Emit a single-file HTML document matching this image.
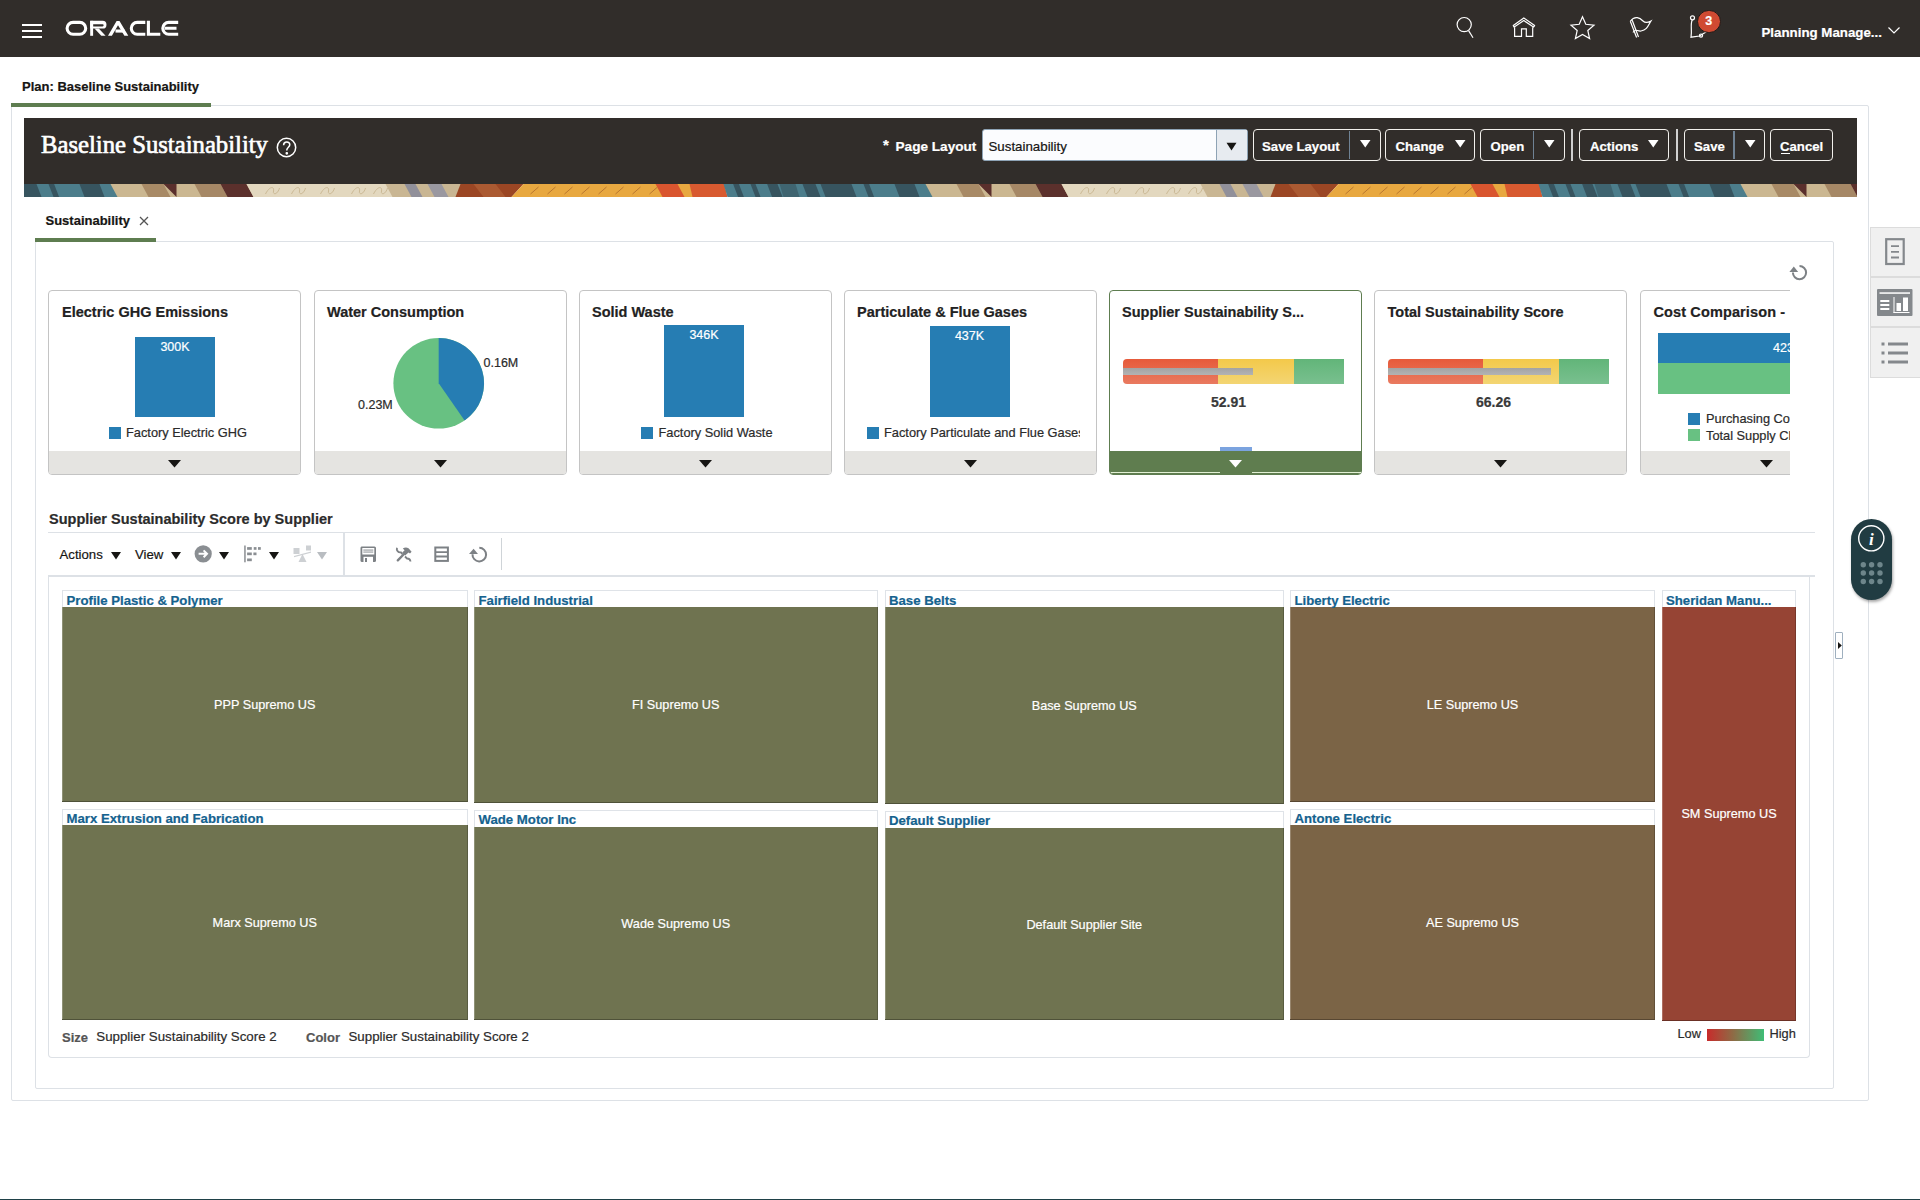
<!DOCTYPE html>
<html>
<head>
<meta charset="utf-8">
<style>
*{box-sizing:border-box;margin:0;padding:0}
html,body{width:1920px;height:1200px;overflow:hidden;background:#fff}
body{position:relative;font-family:"Liberation Sans",sans-serif;color:#161513;-webkit-text-stroke-width:0.2px}
.a{position:absolute}
.t{position:absolute;white-space:nowrap;line-height:1}
.b{font-weight:bold}
svg{position:absolute;overflow:visible}
.btn{top:129px;height:32px;border:1.6px solid #f2f0ec;border-radius:4px}
.bt{top:139.6px;font-size:13.2px;color:#fff}
.arr{top:140px;width:11px;height:8px;fill:#fff}
.card{position:absolute;top:290px;width:253px;height:184.5px;border:1.5px solid #c4c4c4;border-radius:4px;overflow:hidden;background:#fff}
.cf{position:absolute;left:0;right:0;bottom:0;height:22.5px;background:#e5e4e1}
.ct{top:304.8px;font-size:14.5px;color:#222}
.bl{font-size:12.5px;color:#fff;text-align:center}
.lg{font-size:12.8px;color:#2b2b2b}
.pl{font-size:12.5px;color:#2b2b2b}
.da{top:460px;width:13px;height:8px;fill:#161513}
.gauge{position:absolute;top:358.5px;width:221px;height:25.5px;display:flex;border-radius:4px 0 0 4px;overflow:hidden}
.gr{height:100%;background:linear-gradient(#e65a3a,#e97a60)}
.gy{height:100%;background:linear-gradient(#f3c94a,#f3d573)}
.gg{height:100%;background:linear-gradient(#62b579,#79c08f)}
.gb{position:absolute;left:0;top:9.8px;height:6.6px;background:linear-gradient(#a3a3a3,#b3b3b3)}
.ta{top:551.5px;width:10px;height:8px;fill:#161513}
.th{position:absolute;border:1px solid #dfe3e8;border-bottom:none;background:#fff}
.tt{position:absolute;left:-1px;right:-1px;bottom:0;border-bottom:1px solid rgba(0,0,0,.28);border-right:1px solid rgba(0,0,0,.2);box-shadow:inset 1px 0 0 rgba(255,255,255,.22)}
.tn{font-size:13.2px;font-weight:bold;color:#15628e}
.tl{font-size:12.7px;color:#fff;text-align:center}
.gv{top:394.5px;font-size:14px;font-weight:bold;color:#3a3a3a}
</style>
</head>
<body>
<!-- HEADER -->
<div class="a" style="left:0;top:0;width:1920px;height:57px;background:#312d2a"></div>
<div class="a" style="left:22px;top:24px;width:20px;height:2px;background:#fff"></div>
<div class="a" style="left:22px;top:30px;width:20px;height:2px;background:#fff"></div>
<div class="a" style="left:22px;top:36px;width:20px;height:2px;background:#fff"></div>
<svg style="left:60px;top:14px" width="125" height="30" viewBox="0 0 125 30">
 <g fill="none" stroke="#fff" stroke-width="3.1">
  <rect x="7.1" y="8.35" width="18.6" height="11.9" rx="5.95"/>
  <path d="M85.3 8.4 H77.2 A5.9 5.9 0 0 0 77.2 20.2 H85.3"/>
  <path d="M88.4 6.8 V20.25 H100.3"/>
  <path d="M118.2 8.4 H108.7 A5.9 5.9 0 0 0 108.7 20.2 H118.2 M104.8 14.3 H116.5"/>
 </g>
 <g fill="#fff">
  <rect x="30.2" y="6.85" width="2.9" height="14.95"/>
  <path d="M30.2 6.85 H42.6 A3.87 3.87 0 0 1 42.6 14.6 H30.2 Z M33.1 10.3 V12.4 H42.6 A1.05 1.05 0 0 0 42.6 10.3 Z" fill-rule="evenodd"/>
  <path d="M34.5 14.5 H38.8 L45.6 21.8 H41.3 Z"/>
  <path d="M48 21.8 L56.6 6.9 H59.5 L68.3 21.8 H64.4 L58 11.3 L51.9 21.8 Z"/>
  <rect x="55.5" y="15.5" width="9" height="3.1"/>
 </g>
</svg>
<!-- header icons -->
<svg style="left:1440px;top:0" width="290" height="57" viewBox="0 0 290 57" fill="none" stroke="#fff" stroke-width="1.2">
 <circle cx="24.2" cy="24.6" r="7.1"/>
 <path d="M28.6 30.6 L33 37.8"/>
 <path d="M73.3 25.6 L83.8 17.9 L94.6 25.6 L93.5 27.1 L83.8 20.6 L74.2 27.1 Z" stroke-linejoin="round"/>
 <path d="M74.6 27.2 V36.4 H81.5 V28.9 H86.3 V36.4 H92.7 V27.2"/>
 <path d="M142.5 16.7 L145.8 24.3 L154.0 25.1 L147.8 30.5 L149.6 38.6 L142.5 34.4 L135.4 38.6 L137.2 30.5 L131.0 25.1 L139.2 24.3 Z" stroke-linejoin="miter"/>
 <path d="M190.3 21.3 C195 15 200 18 203 21 C206 24 209 22 211 21 C208 26 207 30 201 31 C197 31.5 195 28 193 32.5"/>
 <path d="M190.3 21.3 L196.6 37.5 M192.2 20.3 L198.5 37"/>
 <circle cx="252.5" cy="17.8" r="2"/>
 <path d="M252.3 19.9 C250 24 252.3 30 251 37.2 L259.5 36 L268.5 30.5"/>
 <circle cx="261" cy="35.6" r="1.6"/>
</svg>
<div class="a" style="left:1697px;top:9.5px;width:23.5px;height:23.5px;border-radius:50%;background:#d04a32;border:1.5px solid #1e1b19"></div>
<div class="t b" style="left:1697px;top:15.2px;width:23.5px;text-align:center;font-size:12.5px;color:#fff">3</div>
<div class="t b" style="left:1761.5px;top:25.5px;font-size:13.3px;color:#fff">Planning Manage...</div>
<svg style="left:1888px;top:27px" width="12" height="7" viewBox="0 0 12 7" fill="none" stroke="#fff" stroke-width="1.2"><path d="M0.5 0.5 L6 6 L11.5 0.5"/></svg>

<!-- PLAN TAB -->
<div class="t b" style="left:22px;top:79.5px;font-size:13px;color:#161513">Plan: Baseline Sustainability</div>
<div class="a" style="left:11px;top:105px;width:1858px;height:996px;border:1px solid #dde1e6;border-radius:2px"></div>
<div class="a" style="left:11px;top:103px;width:200px;height:3.5px;background:#5e7d50"></div>

<!-- BANNER -->
<div class="a" style="left:24px;top:118px;width:1833px;height:66px;background:#312d2a"></div>
<div id="strip" class="a" style="left:24px;top:184px;width:1833px;height:13px;overflow:hidden"><svg style="left:0;top:0" width="1833" height="13" viewBox="0 0 1833 13"><g transform="translate(-723.5 0)"><path d="M-5 0 H140 L147 13 H2 Z" fill="#cbb791"/><path d="M26 0 H48 L55 13 H33 Z" fill="#a88a66"/><path d="M48 0 H61 L61 13 H61 Z" fill="#5a2f2c"/><path d="M79 0 H105 L112 13 H86 Z" fill="#a68866"/><path d="M105 0 H131 L138 13 H112 Z" fill="#5b302c"/><path d="M131 0 H275 L282 13 H138 Z" fill="#e3d8bf"/><path d="M150 10 C154 2 159 2 158 7 C157 11 162 11 164 4" fill="none" stroke="#cbb995" stroke-width="1"/><path d="M176 10 C180 2 185 2 184 7 C183 11 188 11 190 4" fill="none" stroke="#cbb995" stroke-width="1"/><path d="M205 10 C209 2 214 2 213 7 C212 11 217 11 219 4" fill="none" stroke="#cbb995" stroke-width="1"/><path d="M236 10 C240 2 245 2 244 7 C243 11 248 11 250 4" fill="none" stroke="#cbb995" stroke-width="1"/><path d="M258 10 C262 2 267 2 266 7 C265 11 270 11 272 4" fill="none" stroke="#cbb995" stroke-width="1"/><path d="M270 0 H350 L357 13 H277 Z" fill="#c9b693"/><path d="M289 0 H300 L307 13 H296 Z" fill="#91909a"/><path d="M312 0 H326 L333 13 H319 Z" fill="#9a98a0"/><path d="M345 0 H408 L396 13 H340 Z" fill="#9b4624"/><path d="M358 0 H380 L390 13 H368 Z" fill="#ab5a32"/><path d="M408 0 H542 L548 13 H396 Z" fill="#e8a840"/><path d="M415 10 L423 3" stroke="#b97730" stroke-width="1"/><path d="M432 10 L440 3" stroke="#b97730" stroke-width="1"/><path d="M449 10 L457 3" stroke="#b97730" stroke-width="1"/><path d="M466 10 L474 3" stroke="#b97730" stroke-width="1"/><path d="M483 10 L491 3" stroke="#b97730" stroke-width="1"/><path d="M500 10 L508 3" stroke="#b97730" stroke-width="1"/><path d="M517 10 L525 3" stroke="#b97730" stroke-width="1"/><path d="M534 10 L542 3" stroke="#b97730" stroke-width="1"/><path d="M540 0 H580 L587 13 H547 Z" fill="#e8a840"/><path d="M540 0 H562 L569 13 H547 Z" fill="#d9552f"/><path d="M574 0 H609 L612 13 H577 Z" fill="#d85a30"/><path d="M608 0 H822 L826 13 H612 Z" fill="#4c7d8b"/><path d="M617.6 0 H623.4 L628.4 13 H622.6 Z" fill="#37545f"/><path d="M635 0 H640 L645 13 H640 Z" fill="#37545f"/><path d="M651.6 0 H662 L667 13 H656.6 Z" fill="#37545f"/><path d="M687 0 H700 L705 13 H692 Z" fill="#37545f"/><path d="M705 0 H736 L741 13 H710 Z" fill="#37545f"/><path d="M748 0 H753.6 L758.6 13 H753 Z" fill="#37545f"/><path d="M779 0 H799 L804 13 H784 Z" fill="#37545f"/><path d="M664 0 H680 L684 13 H668 Z" fill="#3f6470"/></g><g transform="translate(91.5 0)"><path d="M-5 0 H140 L147 13 H2 Z" fill="#cbb791"/><path d="M26 0 H48 L55 13 H33 Z" fill="#a88a66"/><path d="M48 0 H61 L61 13 H61 Z" fill="#5a2f2c"/><path d="M79 0 H105 L112 13 H86 Z" fill="#a68866"/><path d="M105 0 H131 L138 13 H112 Z" fill="#5b302c"/><path d="M131 0 H275 L282 13 H138 Z" fill="#e3d8bf"/><path d="M150 10 C154 2 159 2 158 7 C157 11 162 11 164 4" fill="none" stroke="#cbb995" stroke-width="1"/><path d="M176 10 C180 2 185 2 184 7 C183 11 188 11 190 4" fill="none" stroke="#cbb995" stroke-width="1"/><path d="M205 10 C209 2 214 2 213 7 C212 11 217 11 219 4" fill="none" stroke="#cbb995" stroke-width="1"/><path d="M236 10 C240 2 245 2 244 7 C243 11 248 11 250 4" fill="none" stroke="#cbb995" stroke-width="1"/><path d="M258 10 C262 2 267 2 266 7 C265 11 270 11 272 4" fill="none" stroke="#cbb995" stroke-width="1"/><path d="M270 0 H350 L357 13 H277 Z" fill="#c9b693"/><path d="M289 0 H300 L307 13 H296 Z" fill="#91909a"/><path d="M312 0 H326 L333 13 H319 Z" fill="#9a98a0"/><path d="M345 0 H408 L396 13 H340 Z" fill="#9b4624"/><path d="M358 0 H380 L390 13 H368 Z" fill="#ab5a32"/><path d="M408 0 H542 L548 13 H396 Z" fill="#e8a840"/><path d="M415 10 L423 3" stroke="#b97730" stroke-width="1"/><path d="M432 10 L440 3" stroke="#b97730" stroke-width="1"/><path d="M449 10 L457 3" stroke="#b97730" stroke-width="1"/><path d="M466 10 L474 3" stroke="#b97730" stroke-width="1"/><path d="M483 10 L491 3" stroke="#b97730" stroke-width="1"/><path d="M500 10 L508 3" stroke="#b97730" stroke-width="1"/><path d="M517 10 L525 3" stroke="#b97730" stroke-width="1"/><path d="M534 10 L542 3" stroke="#b97730" stroke-width="1"/><path d="M540 0 H580 L587 13 H547 Z" fill="#e8a840"/><path d="M540 0 H562 L569 13 H547 Z" fill="#d9552f"/><path d="M574 0 H609 L612 13 H577 Z" fill="#d85a30"/><path d="M608 0 H822 L826 13 H612 Z" fill="#4c7d8b"/><path d="M617.6 0 H623.4 L628.4 13 H622.6 Z" fill="#37545f"/><path d="M635 0 H640 L645 13 H640 Z" fill="#37545f"/><path d="M651.6 0 H662 L667 13 H656.6 Z" fill="#37545f"/><path d="M687 0 H700 L705 13 H692 Z" fill="#37545f"/><path d="M705 0 H736 L741 13 H710 Z" fill="#37545f"/><path d="M748 0 H753.6 L758.6 13 H753 Z" fill="#37545f"/><path d="M779 0 H799 L804 13 H784 Z" fill="#37545f"/><path d="M664 0 H680 L684 13 H668 Z" fill="#3f6470"/></g><g transform="translate(906.5 0)"><path d="M-5 0 H140 L147 13 H2 Z" fill="#cbb791"/><path d="M26 0 H48 L55 13 H33 Z" fill="#a88a66"/><path d="M48 0 H61 L61 13 H61 Z" fill="#5a2f2c"/><path d="M79 0 H105 L112 13 H86 Z" fill="#a68866"/><path d="M105 0 H131 L138 13 H112 Z" fill="#5b302c"/><path d="M131 0 H275 L282 13 H138 Z" fill="#e3d8bf"/><path d="M150 10 C154 2 159 2 158 7 C157 11 162 11 164 4" fill="none" stroke="#cbb995" stroke-width="1"/><path d="M176 10 C180 2 185 2 184 7 C183 11 188 11 190 4" fill="none" stroke="#cbb995" stroke-width="1"/><path d="M205 10 C209 2 214 2 213 7 C212 11 217 11 219 4" fill="none" stroke="#cbb995" stroke-width="1"/><path d="M236 10 C240 2 245 2 244 7 C243 11 248 11 250 4" fill="none" stroke="#cbb995" stroke-width="1"/><path d="M258 10 C262 2 267 2 266 7 C265 11 270 11 272 4" fill="none" stroke="#cbb995" stroke-width="1"/><path d="M270 0 H350 L357 13 H277 Z" fill="#c9b693"/><path d="M289 0 H300 L307 13 H296 Z" fill="#91909a"/><path d="M312 0 H326 L333 13 H319 Z" fill="#9a98a0"/><path d="M345 0 H408 L396 13 H340 Z" fill="#9b4624"/><path d="M358 0 H380 L390 13 H368 Z" fill="#ab5a32"/><path d="M408 0 H542 L548 13 H396 Z" fill="#e8a840"/><path d="M415 10 L423 3" stroke="#b97730" stroke-width="1"/><path d="M432 10 L440 3" stroke="#b97730" stroke-width="1"/><path d="M449 10 L457 3" stroke="#b97730" stroke-width="1"/><path d="M466 10 L474 3" stroke="#b97730" stroke-width="1"/><path d="M483 10 L491 3" stroke="#b97730" stroke-width="1"/><path d="M500 10 L508 3" stroke="#b97730" stroke-width="1"/><path d="M517 10 L525 3" stroke="#b97730" stroke-width="1"/><path d="M534 10 L542 3" stroke="#b97730" stroke-width="1"/><path d="M540 0 H580 L587 13 H547 Z" fill="#e8a840"/><path d="M540 0 H562 L569 13 H547 Z" fill="#d9552f"/><path d="M574 0 H609 L612 13 H577 Z" fill="#d85a30"/><path d="M608 0 H822 L826 13 H612 Z" fill="#4c7d8b"/><path d="M617.6 0 H623.4 L628.4 13 H622.6 Z" fill="#37545f"/><path d="M635 0 H640 L645 13 H640 Z" fill="#37545f"/><path d="M651.6 0 H662 L667 13 H656.6 Z" fill="#37545f"/><path d="M687 0 H700 L705 13 H692 Z" fill="#37545f"/><path d="M705 0 H736 L741 13 H710 Z" fill="#37545f"/><path d="M748 0 H753.6 L758.6 13 H753 Z" fill="#37545f"/><path d="M779 0 H799 L804 13 H784 Z" fill="#37545f"/><path d="M664 0 H680 L684 13 H668 Z" fill="#3f6470"/></g><g transform="translate(1721.5 0)"><path d="M-5 0 H140 L147 13 H2 Z" fill="#cbb791"/><path d="M26 0 H48 L55 13 H33 Z" fill="#a88a66"/><path d="M48 0 H61 L61 13 H61 Z" fill="#5a2f2c"/><path d="M79 0 H105 L112 13 H86 Z" fill="#a68866"/><path d="M105 0 H131 L138 13 H112 Z" fill="#5b302c"/><path d="M131 0 H275 L282 13 H138 Z" fill="#e3d8bf"/><path d="M150 10 C154 2 159 2 158 7 C157 11 162 11 164 4" fill="none" stroke="#cbb995" stroke-width="1"/><path d="M176 10 C180 2 185 2 184 7 C183 11 188 11 190 4" fill="none" stroke="#cbb995" stroke-width="1"/><path d="M205 10 C209 2 214 2 213 7 C212 11 217 11 219 4" fill="none" stroke="#cbb995" stroke-width="1"/><path d="M236 10 C240 2 245 2 244 7 C243 11 248 11 250 4" fill="none" stroke="#cbb995" stroke-width="1"/><path d="M258 10 C262 2 267 2 266 7 C265 11 270 11 272 4" fill="none" stroke="#cbb995" stroke-width="1"/><path d="M270 0 H350 L357 13 H277 Z" fill="#c9b693"/><path d="M289 0 H300 L307 13 H296 Z" fill="#91909a"/><path d="M312 0 H326 L333 13 H319 Z" fill="#9a98a0"/><path d="M345 0 H408 L396 13 H340 Z" fill="#9b4624"/><path d="M358 0 H380 L390 13 H368 Z" fill="#ab5a32"/><path d="M408 0 H542 L548 13 H396 Z" fill="#e8a840"/><path d="M415 10 L423 3" stroke="#b97730" stroke-width="1"/><path d="M432 10 L440 3" stroke="#b97730" stroke-width="1"/><path d="M449 10 L457 3" stroke="#b97730" stroke-width="1"/><path d="M466 10 L474 3" stroke="#b97730" stroke-width="1"/><path d="M483 10 L491 3" stroke="#b97730" stroke-width="1"/><path d="M500 10 L508 3" stroke="#b97730" stroke-width="1"/><path d="M517 10 L525 3" stroke="#b97730" stroke-width="1"/><path d="M534 10 L542 3" stroke="#b97730" stroke-width="1"/><path d="M540 0 H580 L587 13 H547 Z" fill="#e8a840"/><path d="M540 0 H562 L569 13 H547 Z" fill="#d9552f"/><path d="M574 0 H609 L612 13 H577 Z" fill="#d85a30"/><path d="M608 0 H822 L826 13 H612 Z" fill="#4c7d8b"/><path d="M617.6 0 H623.4 L628.4 13 H622.6 Z" fill="#37545f"/><path d="M635 0 H640 L645 13 H640 Z" fill="#37545f"/><path d="M651.6 0 H662 L667 13 H656.6 Z" fill="#37545f"/><path d="M687 0 H700 L705 13 H692 Z" fill="#37545f"/><path d="M705 0 H736 L741 13 H710 Z" fill="#37545f"/><path d="M748 0 H753.6 L758.6 13 H753 Z" fill="#37545f"/><path d="M779 0 H799 L804 13 H784 Z" fill="#37545f"/><path d="M664 0 H680 L684 13 H668 Z" fill="#3f6470"/></g></svg></div>
<div class="t" style="left:41px;top:133.2px;font-family:'Liberation Serif',serif;font-size:24.7px;color:#fff;-webkit-text-stroke:0.65px #fff">Baseline Sustainability</div>
<svg style="left:275.8px;top:137.1px" width="22" height="22" viewBox="0 0 22 22" fill="none" stroke="#fff" stroke-width="1.5">
 <circle cx="10.5" cy="10.5" r="9.2"/>
 <path d="M7.6 8.2 C7.6 5.8 9.2 4.9 10.7 4.9 C12.5 4.9 13.8 6.1 13.8 7.8 C13.8 10 10.8 10.5 10.8 12.9 V13.5"/>
 <circle cx="10.8" cy="16.3" r="0.6" fill="#fff"/>
</svg>
<div class="t b" style="left:883px;top:137px;font-size:15px;color:#fff">*</div>
<div class="t b" style="left:895.5px;top:139.5px;font-size:13.6px;color:#fff">Page Layout</div>
<div class="a" style="left:982px;top:129px;width:266px;height:32px;background:#fbfcfe;border:1px solid #8ea3b5;border-radius:3px"></div>
<div class="a" style="left:1216px;top:130px;width:31px;height:30px;background:#e7ebf0;border-left:1px solid #8ea3b5"></div>
<div class="t" style="left:988.5px;top:139.5px;font-size:13.3px;color:#161513">Sustainability</div>
<svg style="left:1226px;top:142px" width="11" height="9" viewBox="0 0 11 9"><path d="M0.5 0.8 H10.5 L5.5 8.5 Z" fill="#161513"/></svg>
<!-- buttons -->
<div class="a btn" style="left:1253px;width:128px"></div>
<div class="a" style="left:1349px;top:131px;width:1px;height:28px;background:#6f8294"></div>
<div class="t b bt" style="left:1262px">Save Layout</div>
<svg class="arr" style="left:1360px"><path d="M0 0 H10.5 L5.25 7.5 Z"/></svg>

<div class="a btn" style="left:1385px;width:90px"></div>
<div class="t b bt" style="left:1395.5px">Change</div>
<svg class="arr" style="left:1455px"><path d="M0 0 H10.5 L5.25 7.5 Z"/></svg>

<div class="a btn" style="left:1480px;width:85px"></div>
<div class="a" style="left:1533px;top:131px;width:1px;height:28px;background:#6f8294"></div>
<div class="t b bt" style="left:1490.5px">Open</div>
<svg class="arr" style="left:1543.5px"><path d="M0 0 H10.5 L5.25 7.5 Z"/></svg>

<div class="a" style="left:1571px;top:129px;width:2px;height:32px;background:#d0d0d0"></div>

<div class="a btn" style="left:1579px;width:90px"></div>
<div class="t b bt" style="left:1590px">Actions</div>
<svg class="arr" style="left:1648px"><path d="M0 0 H10.5 L5.25 7.5 Z"/></svg>

<div class="a" style="left:1675.5px;top:129px;width:2px;height:32px;background:#d0d0d0"></div>

<div class="a btn" style="left:1684px;width:81px"></div>
<div class="a" style="left:1733px;top:131px;width:1.5px;height:28px;background:#6f8294"></div>
<div class="t b bt" style="left:1694px">Save</div>
<svg class="arr" style="left:1745px"><path d="M0 0 H10.5 L5.25 7.5 Z"/></svg>

<div class="a btn" style="left:1770px;width:63px"></div>
<div class="t b bt" style="left:1780px">Cancel</div>
<div class="a" style="left:1781px;top:153px;width:9px;height:1px;background:#fff"></div>

<!-- SUSTAINABILITY TAB + PANEL -->
<div class="t b" style="left:45.5px;top:214px;font-size:13px;color:#161513">Sustainability</div>
<svg style="left:138.5px;top:215.5px" width="10" height="10" viewBox="0 0 10 10" fill="none" stroke="#555" stroke-width="1.3"><path d="M1 1 L9 9 M9 1 L1 9"/></svg>
<div class="a" style="left:35px;top:241px;width:1799px;height:848px;border:1px solid #dde1e6;border-radius:2px"></div>
<div class="a" style="left:35px;top:238px;width:121px;height:3.5px;background:#5e7d50"></div>
<svg style="left:1788px;top:262px" width="22" height="20" viewBox="0 0 22 20" fill="none">
 <path d="M11.5 4 A6.6 6.6 0 1 1 4.9 10.6" stroke="#7d8185" stroke-width="2"/>
 <path d="M5.8 4.6 L10.2 9.9 H1.4 Z" fill="#7d8185"/>
</svg>

<!-- CARDS -->
<div class="a" style="left:40px;top:280px;width:1750px;height:200px;overflow:hidden">
 <div style="position:absolute;left:-40px;top:-280px;width:1920px;height:1200px">
  <!-- card1 -->
  <div class="card" style="left:48px"><div class="cf"></div></div>
  <div class="t b ct" style="left:62px">Electric GHG Emissions</div>
  <div class="a" style="left:135px;top:337px;width:80px;height:80px;background:#267db3"></div>
  <div class="t bl" style="left:135px;top:340.5px;width:80px">300K</div>
  <div class="a" style="left:109px;top:427px;width:12px;height:12px;background:#267db3"></div>
  <div class="t lg" style="left:126px;top:426.5px">Factory Electric GHG</div>
  <svg class="da" style="left:168px"><path d="M0 0 H13 L6.5 7.5 Z"/></svg>

  <!-- card2 -->
  <div class="card" style="left:314px"><div class="cf"></div></div>
  <div class="t b ct" style="left:327px">Water Consumption</div>
  <svg style="left:393px;top:338px" width="92" height="92" viewBox="0 0 92 92">
   <circle cx="45.7" cy="45.3" r="45.3" fill="#68c182"/>
   <path d="M45.7 45.3 V0 A45.3 45.3 0 0 1 71.6 82.5 Z" fill="#267db3"/>
  </svg>
  <div class="t pl" style="left:483.5px;top:356.5px">0.16M</div>
  <div class="t pl" style="left:358px;top:399px">0.23M</div>
  <svg class="da" style="left:433.5px"><path d="M0 0 H13 L6.5 7.5 Z"/></svg>

  <!-- card3 -->
  <div class="card" style="left:579px"><div class="cf"></div></div>
  <div class="t b ct" style="left:592px">Solid Waste</div>
  <div class="a" style="left:664px;top:324.5px;width:80px;height:92.5px;background:#267db3"></div>
  <div class="t bl" style="left:664px;top:328.5px;width:80px">346K</div>
  <div class="a" style="left:641px;top:427px;width:12px;height:12px;background:#267db3"></div>
  <div class="t lg" style="left:658.5px;top:426.5px">Factory Solid Waste</div>
  <svg class="da" style="left:699px"><path d="M0 0 H13 L6.5 7.5 Z"/></svg>

  <!-- card4 -->
  <div class="card" style="left:844px"><div class="cf"></div></div>
  <div class="t b ct" style="left:857px">Particulate &amp; Flue Gases</div>
  <div class="a" style="left:929.5px;top:326px;width:80px;height:91px;background:#267db3"></div>
  <div class="t bl" style="left:929.5px;top:330px;width:80px">437K</div>
  <div class="a" style="left:867px;top:427px;width:12px;height:12px;background:#267db3"></div>
  <div class="a" style="left:884px;top:420px;width:196px;height:24px;overflow:hidden"><div class="t lg" style="left:0;top:6.5px">Factory Particulate and Flue Gases</div></div>
  <svg class="da" style="left:964px"><path d="M0 0 H13 L6.5 7.5 Z"/></svg>

  <!-- card5 (selected) -->
  <div class="card" style="left:1109px;border-color:#5e7d50"><div class="cf" style="background:#5f7d4f"></div></div>
  <div class="a" style="left:1220px;top:447px;width:32px;height:4.5px;background:#7ba3df"></div>
  <div class="a" style="left:1110.5px;top:472px;width:250px;height:1.2px;background:#e2f0d4"></div>
  <div class="a" style="left:1220px;top:451px;width:32px;height:24px;background:#5f7d4f"></div>
  <div class="t b ct" style="left:1122px">Supplier Sustainability S...</div>
  <div class="gauge" style="left:1123px">
   <div class="gr" style="width:95px"></div><div class="gy" style="width:76px"></div><div class="gg" style="width:50px"></div>
   <div class="gb" style="width:130px"></div>
  </div>
  <div class="t gv" style="left:1211px">52.91</div>
  <svg class="da" style="left:1229px;fill:#fff"><path d="M0 0 H13 L6.5 7.5 Z"/></svg>

  <!-- card6 -->
  <div class="card" style="left:1374px"><div class="cf"></div></div>
  <div class="t b ct" style="left:1387.5px">Total Sustainability Score</div>
  <div class="gauge" style="left:1388px">
   <div class="gr" style="width:95px"></div><div class="gy" style="width:76px"></div><div class="gg" style="width:50px"></div>
   <div class="gb" style="width:163px"></div>
  </div>
  <div class="t gv" style="left:1476px">66.26</div>
  <svg class="da" style="left:1494px"><path d="M0 0 H13 L6.5 7.5 Z"/></svg>

  <!-- card7 -->
  <div class="card" style="left:1640px"><div class="cf"></div></div>
  <div class="t b ct" style="left:1653.5px;letter-spacing:0.12px">Cost Comparison - </div>
  <div class="a" style="left:1658px;top:333px;width:200px;height:30px;background:#267db3"></div>
  <div class="a" style="left:1658px;top:363px;width:200px;height:30.5px;background:#68c182"></div>
  <div class="t bl" style="left:1773px;top:341.5px;text-align:left">4231K</div>
  <div class="a" style="left:1688px;top:413px;width:12px;height:12px;background:#267db3"></div>
  <div class="a" style="left:1688px;top:429px;width:12px;height:12px;background:#68c182"></div>
  <div class="t lg" style="left:1706px;top:413px">Purchasing Cost</div>
  <div class="t lg" style="left:1706px;top:430px">Total Supply Chain</div>
  <svg class="da" style="left:1760px"><path d="M0 0 H13 L6.5 7.5 Z"/></svg>
 </div>
</div>

<!-- SECTION TITLE + TOOLBAR -->
<div class="t b" style="left:49px;top:511.9px;font-size:14.5px;color:#2b2b2b">Supplier Sustainability Score by Supplier</div>
<div class="a" style="left:48px;top:532px;width:1767px;height:1px;background:#dde1e6"></div>
<div class="a" style="left:48px;top:575px;width:1767px;height:2px;background:#dde1e6"></div>
<div class="a" style="left:343px;top:533px;width:1.5px;height:42px;background:#dde1e6"></div>
<div class="a" style="left:501px;top:538px;width:1px;height:32px;background:#cfd4d8"></div>
<div class="t" style="left:59.5px;top:548.2px;font-size:13.2px;color:#161513">Actions</div>
<svg class="ta" style="left:111px"><path d="M0 0 H10 L5 7.5 Z"/></svg>
<div class="t" style="left:135px;top:548.2px;font-size:13.2px;color:#161513">View</div>
<svg class="ta" style="left:170.5px"><path d="M0 0 H10 L5 7.5 Z"/></svg>
<svg style="left:194px;top:544.5px" width="19" height="18" viewBox="0 0 19 18">
 <circle cx="9.2" cy="8.8" r="8.6" fill="#8a8e92"/>
 <path d="M4.6 8.8 H12.6 M9.6 5.4 L13 8.8 L9.6 12.2" fill="none" stroke="#fff" stroke-width="2"/>
</svg>
<svg class="ta" style="left:219px"><path d="M0 0 H10 L5 7.5 Z"/></svg>
<svg style="left:243px;top:544.5px" width="19" height="18" viewBox="0 0 19 18" fill="#8a8e92">
 <rect x="1.2" y="0.5" width="1.5" height="16.8"/>
 <rect x="4.1" y="2.1" width="4.7" height="2.7"/><rect x="10.75" y="2.1" width="2.75" height="2.7"/><rect x="15" y="2.1" width="2.8" height="2.7"/>
 <rect x="4.1" y="7.5" width="4.7" height="2.7"/><rect x="10.4" y="7.5" width="3.1" height="2.7"/>
 <rect x="4.1" y="13.5" width="4.7" height="2.7"/>
</svg>
<svg class="ta" style="left:268.5px"><path d="M0 0 H10 L5 7.5 Z"/></svg>
<svg style="left:292.5px;top:544.5px" width="19" height="18" viewBox="0 0 19 18" fill="#cdd0d3">
 <rect x="0.5" y="3" width="6" height="6"/><rect x="13" y="0.5" width="5" height="5"/>
 <path d="M1 11 L18 6.5 V7.8 L1 12.3 Z"/><path d="M9.5 9 L13.5 17 H5.5 Z"/>
</svg>
<svg class="ta" style="left:317px;fill:#b9bdc1"><path d="M0 0 H10 L5 7.5 Z"/></svg>
<svg style="left:359.5px;top:545.5px" width="17" height="17" viewBox="0 0 17 17">
 <path d="M1.5 0.5 H14.5 Q16 0.5 16 2 V14.5 Q16 16 14.5 16 H2 Q0.5 16 0.5 14.5 V2 Q0.5 0.5 1.5 0.5 Z" fill="#7d8185"/>
 <rect x="2.3" y="2" width="12" height="6.5" fill="#fff"/>
 <rect x="3.3" y="3.6" width="10" height="0.9" fill="#7d8185"/><rect x="3.3" y="5.6" width="10" height="0.9" fill="#7d8185"/>
 <rect x="3.5" y="10.8" width="9.5" height="5.2" fill="#fff"/><rect x="5" y="12" width="2" height="4" fill="#7d8185"/>
</svg>
<svg style="left:390px;top:540px" width="100" height="28" viewBox="0 0 100 28">
 <g fill="#7d8185" stroke="#7d8185">
  <path d="M7.8 20.3 L14 14" stroke-width="2.4" stroke-linecap="round" fill="none"/>
  <path d="M12.8 8.6 Q15.5 6.8 18.5 8.2 L21.6 11.8 L20 13.6 L18.5 12.6 L15.2 15.5 L12.3 12.6 L14.6 10.3 Z" stroke="none"/>
  <path d="M7 7.8 A3.4 3.4 0 0 0 10.8 12.3 L12.5 14" stroke-width="1.8" fill="none"/>
  <path d="M15 16.5 L17 18.5 A3.4 3.4 0 0 1 20.5 21.5" stroke-width="1.8" fill="none"/>
 </g>
 <g fill="none" stroke="#7d8185">
  <rect x="45.3" y="7.5" width="12.6" height="13.4" stroke-width="2"/>
  <path d="M45.3 12.1 H57.9 M45.3 16.5 H57.9" stroke-width="1.8"/>
  <path d="M89.3 7.8 A6.8 6.8 0 1 1 82.5 14.2" stroke-width="2"/>
 </g>
 <path d="M83.6 8.8 L88 13.9 H79 Z" fill="#7d8185"/>
</svg>

<!-- TREEMAP -->
<div class="a" style="left:48px;top:576px;width:1762px;height:482px;border:1px solid #dde1e6;border-top:none;border-radius:0 0 4px 4px"></div>
<!-- row1 -->
<div class="th" style="left:62px;top:590px;width:405.5px;height:211.5px"><div class="tt" style="top:16px;background:#6f7350"></div></div>
<div class="t tn" style="left:66.5px;top:593.7px">Profile Plastic &amp; Polymer</div>
<div class="t tl" style="left:62px;top:698.5px;width:405.5px">PPP Supremo US</div>

<div class="th" style="left:474px;top:590px;width:403.5px;height:212.5px"><div class="tt" style="top:16px;background:#6f7350"></div></div>
<div class="t tn" style="left:478.5px;top:593.7px">Fairfield Industrial</div>
<div class="t tl" style="left:474px;top:699.0px;width:403.5px">FI Supremo US</div>

<div class="th" style="left:885px;top:590px;width:398.5px;height:213.5px"><div class="tt" style="top:16px;background:#6f7350"></div></div>
<div class="t tn" style="left:889px;top:593.7px">Base Belts</div>
<div class="t tl" style="left:885px;top:699.5px;width:398.5px">Base Supremo US</div>

<div class="th" style="left:1290px;top:590px;width:365px;height:211.5px"><div class="tt" style="top:16px;background:#7b6446"></div></div>
<div class="t tn" style="left:1294.5px;top:593.7px">Liberty Electric</div>
<div class="t tl" style="left:1290px;top:698.5px;width:365px">LE Supremo US</div>

<div class="th" style="left:1662px;top:590px;width:134px;height:430.5px"><div class="tt" style="top:16px;background:#964434"></div></div>
<div class="t tn" style="left:1666px;top:593.7px">Sheridan Manu...</div>
<div class="t tl" style="left:1662px;top:808.0px;width:134px">SM Supremo US</div>
<!-- row2 -->
<div class="th" style="left:62px;top:809px;width:405.5px;height:211px"><div class="tt" style="top:15.3px;background:#6f7350"></div></div>
<div class="t tn" style="left:66.5px;top:812px">Marx Extrusion and Fabrication</div>
<div class="t tl" style="left:62px;top:917.0px;width:405.5px">Marx Supremo US</div>

<div class="th" style="left:474px;top:810px;width:403.5px;height:210px"><div class="tt" style="top:15.9px;background:#6f7350"></div></div>
<div class="t tn" style="left:478.5px;top:813px">Wade Motor Inc</div>
<div class="t tl" style="left:474px;top:918.0px;width:403.5px">Wade Supremo US</div>

<div class="th" style="left:885px;top:811px;width:398.5px;height:209px"><div class="tt" style="top:15.9px;background:#6f7350"></div></div>
<div class="t tn" style="left:889px;top:814px">Default Supplier</div>
<div class="t tl" style="left:885px;top:918.5px;width:398.5px">Default Supplier Site</div>

<div class="th" style="left:1290px;top:809px;width:365px;height:211px"><div class="tt" style="top:15.3px;background:#7b6446"></div></div>
<div class="t tn" style="left:1294.5px;top:812px">Antone Electric</div>
<div class="t tl" style="left:1290px;top:917.0px;width:365px">AE Supremo US</div>

<!-- treemap legend -->
<div class="t b" style="left:62px;top:1030.8px;font-size:13px;color:#555">Size</div>
<div class="t" style="left:96.3px;top:1029.8px;font-size:13.3px;color:#2b2b2b">Supplier Sustainability Score 2</div>
<div class="t b" style="left:306px;top:1030.8px;font-size:13px;color:#555">Color</div>
<div class="t" style="left:348.5px;top:1029.8px;font-size:13.3px;color:#2b2b2b">Supplier Sustainability Score 2</div>
<div class="t" style="left:1677.5px;top:1028px;font-size:12.8px;color:#2b2b2b">Low</div>
<div class="a" style="left:1707px;top:1029px;width:57px;height:12px;background:linear-gradient(90deg,#c82b2b,#8f6a45 45%,#3fbd76)"></div>
<div class="t" style="left:1769.5px;top:1028px;font-size:12.8px;color:#2b2b2b">High</div>

<!-- RIGHT SIDEBAR -->
<div class="a" style="left:1870px;top:227px;width:50px;height:151px;background:#f0f0f0;border:1px solid #dcdcdc;border-right:none"></div>
<div class="a" style="left:1871px;top:276px;width:49px;height:2px;background:#dcdcdc"></div>
<div class="a" style="left:1871px;top:326px;width:49px;height:2px;background:#dcdcdc"></div>
<svg style="left:1885px;top:238px" width="21" height="28" viewBox="0 0 21 28" fill="none" stroke="#84888c">
 <rect x="1.2" y="1.2" width="17.5" height="24.8" stroke-width="2.2"/>
 <path d="M6 8.2 H14 M6 13.8 H14 M6 19.5 H14" stroke-width="1.8"/>
</svg>
<svg style="left:1877px;top:289px" width="36" height="28" viewBox="0 0 36 28">
 <rect x="0" y="0" width="35.5" height="27" rx="1" fill="#84888c"/>
 <rect x="2.5" y="3.3" width="30.5" height="1.5" fill="#fff"/>
 <rect x="3.3" y="11" width="9" height="2" fill="#fff"/><rect x="3.3" y="15" width="9" height="2" fill="#fff"/><rect x="3.3" y="19" width="9" height="2" fill="#fff"/>
 <rect x="16.5" y="8" width="1" height="16" fill="#fff"/><rect x="16.5" y="23" width="16" height="1" fill="#fff"/>
 <rect x="19.5" y="14" width="4.5" height="8" fill="#fff"/><rect x="26" y="8.5" width="5" height="13.5" fill="#fff"/>
</svg>
<svg style="left:1881px;top:341px" width="28" height="24" viewBox="0 0 28 24" fill="#84888c">
 <rect x="0.5" y="1.5" width="3" height="3"/><rect x="7" y="1.5" width="20" height="3"/>
 <rect x="0.5" y="10.5" width="3" height="3"/><rect x="7" y="10.5" width="20" height="3"/>
 <rect x="0.5" y="19.5" width="3" height="3"/><rect x="7" y="19.5" width="20" height="3"/>
</svg>

<!-- INFO PILL -->
<div class="a" style="left:1851px;top:519px;width:41px;height:80.5px;border-radius:20.5px;background:#213c42;box-shadow:1px 2px 3px rgba(0,0,0,.35)"></div>
<svg style="left:1851px;top:519px" width="41" height="81" viewBox="0 0 41 81">
 <circle cx="20.3" cy="19.3" r="12.6" fill="none" stroke="#fff" stroke-width="1.4"/>
 <text x="20.3" y="25.5" text-anchor="middle" font-family="Liberation Serif" font-style="italic" font-weight="bold" font-size="17" fill="#fff">i</text>
 <g fill="#6e868b">
  <circle cx="12.3" cy="45.7" r="2.7"/><circle cx="20.6" cy="45.7" r="2.7"/><circle cx="29" cy="45.7" r="2.7"/>
  <circle cx="12.3" cy="54" r="2.7"/><circle cx="20.6" cy="54" r="2.7"/><circle cx="29" cy="54" r="2.7"/>
  <circle cx="12.3" cy="62.5" r="2.7"/><circle cx="20.6" cy="62.5" r="2.7"/><circle cx="29" cy="62.5" r="2.7"/>
 </g>
</svg>
<!-- collapse handle -->
<div class="a" style="left:1835px;top:632px;width:8px;height:26.5px;border:1px solid #9fb0bf;border-radius:1px;background:#fff"></div>
<svg style="left:1837.5px;top:641.5px" width="4" height="7" viewBox="0 0 4 7"><path d="M0 0 L3.8 3.5 L0 7 Z" fill="#161513"/></svg>

<!-- bottom line -->
<div class="a" style="left:0;top:1198.5px;width:1920px;height:1.5px;background:#1f4148"></div>

</body>
</html>
